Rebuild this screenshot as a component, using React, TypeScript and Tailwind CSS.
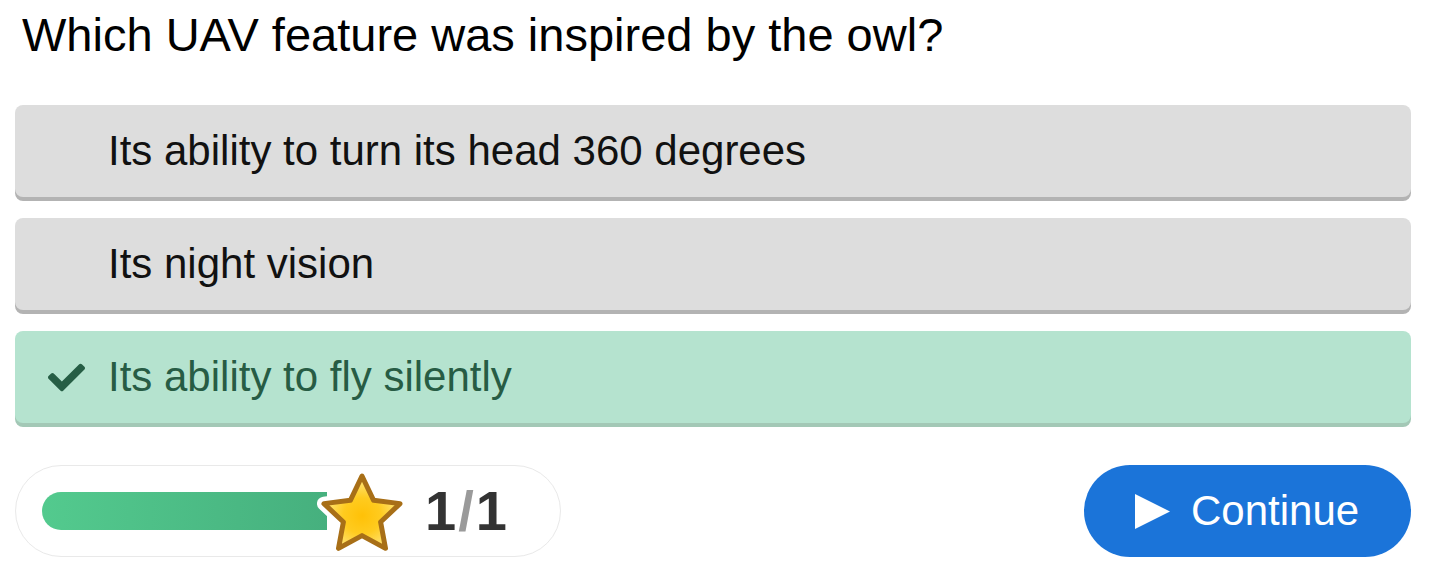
import React from "react";
import { FaCheck } from "react-icons/fa";

const STAR =
  "M45 10 L56.6 34.3 L83.04 37.64 L63.6 56.0 L68.51 82.36 L45 69.6 L21.49 82.36 L26.4 56.0 L6.96 37.64 L33.4 34.3 Z";

function Star() {
  return (
    <svg width="90" height="90" viewBox="0 0 90 90" className="ml-[-10px] shrink-0">
      <defs>
        <radialGradient id="starFill" cx="50%" cy="55%" r="55%">
          <stop offset="0%" stopColor="#ffc107" />
          <stop offset="45%" stopColor="#ffcb1f" />
          <stop offset="100%" stopColor="#ffe98a" />
        </radialGradient>
      </defs>
      <path d={STAR} fill="#fff" stroke="#fff" strokeWidth="14" strokeLinejoin="round" />
      <path d={STAR} fill="url(#starFill)" stroke="#a86f17" strokeWidth="5" strokeLinejoin="round" />
    </svg>
  );
}

function Option({ text, correct }: { text: string; correct?: boolean }) {
  return (
    <div
      className={
        correct
          ? "h-[92px] rounded-[8px] bg-[#b5e3cf] shadow-[0_4px_0_#a3c8b6] flex items-center pl-[30px] text-[#275c44]"
          : "h-[92px] rounded-[8px] bg-[#dddddd] shadow-[0_4px_0_#b3b3b3] flex items-center pl-[30px] text-[#111111]"
      }
    >
      <div className="w-[63px] pl-[3px] flex items-center">
        {correct ? <FaCheck className="w-[37px] h-[37px] text-[#265e45]" /> : null}
      </div>
      <span className="text-[42px] leading-none">{text}</span>
    </div>
  );
}

export default function App() {
  return (
    <div className="w-[1429px] h-[581px] bg-white pl-[15px] pr-[18px] font-['Liberation_Sans',Arial,sans-serif] overflow-hidden">
      <h1 className="pt-[8px] pl-[7px] text-[47px] leading-[54px] text-black font-normal">
        Which UAV feature was inspired by the owl?
      </h1>
      <div className="mt-[43px] flex flex-col gap-[21px]">
        <Option text="Its ability to turn its head 360 degrees" />
        <Option text="Its night vision" />
        <Option text="Its ability to fly silently" correct />
      </div>
      <div className="mt-[42px] flex items-center justify-between">
        <div className="w-[546px] h-[92px] rounded-full border border-[#e9e9e9] flex items-center pl-[26px]">
          <div className="w-[285px] h-[38px] rounded-l-full bg-linear-to-r from-[#53ca8e] to-[#46b07e]" />
          <Star />
          <div className="ml-[18px] text-[56px] leading-none font-bold text-[#333333] flex items-center">
            <span>1</span>
            <span className="mx-[2px] text-[#9a9a9a]">/</span>
            <span>1</span>
          </div>
        </div>
        <button className="w-[327px] h-[92px] rounded-full bg-[#1b74d9] flex items-center pl-[51px] text-white">
          <svg width="35" height="35" viewBox="0 0 35 35" className="shrink-0">
            <polygon points="0,0 35,17.5 0,35" fill="#fff" />
          </svg>
          <span className="ml-[21px] text-[42px] leading-none">Continue</span>
        </button>
      </div>
    </div>
  );
}
